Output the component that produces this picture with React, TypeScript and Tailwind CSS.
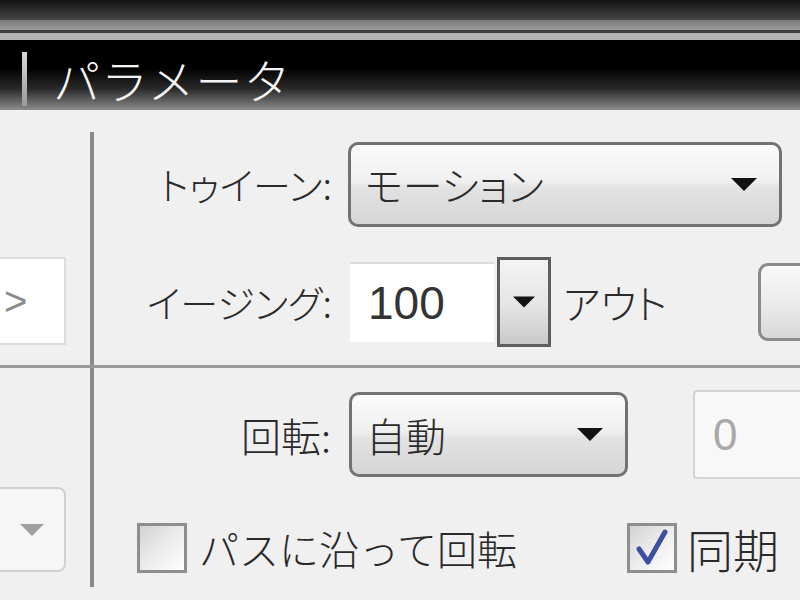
import React from 'react'

const jp = "font-['Noto_Sans_CJK_JP','Noto_Sans',sans-serif]"

const Arrow = ({ color = '#111', w = 26, h = 13 }: { color?: string; w?: number; h?: number }) => (
  <svg width={w} height={h} viewBox="0 0 26 13">
    <polygon points="0,0 26,0 13,13" fill={color} />
  </svg>
)

const Combo = ({ label, width }: { label: string; width: string }) => (
  <div
    className={`${width} h-[85px] flex items-center justify-between pl-[14px] pr-[22px] rounded-[10px] border-[3px] border-[#727272] bg-[linear-gradient(to_bottom,#fbfbfb_0%,#f0f0f0_45%,#e2e2e2_55%,#d6d6d6_100%)]`}
  >
    <span className="text-[40px] leading-none font-light text-[#2a2a2a] [font-feature-settings:'palt']">{label}</span>
    <Arrow />
  </div>
)

const Check = ({ checked }: { checked?: boolean }) => (
  <div className="w-[50px] h-[50px] shrink-0 border-[3px] border-[#8e8e8e] bg-[linear-gradient(135deg,#d2d2d2_0%,#ececec_50%,#ffffff_100%)] flex items-center justify-center">
    {checked && (
      <svg width="34" height="38" viewBox="0 0 34 38">
        <path d="M4 20 L13 33 L30 3" fill="none" stroke="#3d4f9e" strokeWidth="5" strokeLinecap="round" strokeLinejoin="round" />
      </svg>
    )}
  </div>
)

export default function App() {
  return (
    <div className={`w-[800px] h-[600px] overflow-hidden bg-[#f0f0f0] ${jp}`}>
      {/* title bar */}
      <div className="h-[20px] bg-[linear-gradient(to_bottom,#121212,#474747)]" />
      <div className="h-[10px] bg-[linear-gradient(to_bottom,#7a7a7a,#9c9c9c)]" />
      <div className="h-[3px] bg-[#3e3e3e]" />
      <div className="h-[7px] bg-[#b4b4b4]" />
      <div className="h-[70px] flex items-center bg-[linear-gradient(to_bottom,#000_0%,#000_40%,#2a2a2a_70%,#8c8c8c_100%)]">
        <div className="ml-[22px] w-[5px] h-[54px] mt-[8px] bg-[linear-gradient(to_bottom,#d8d8d8,#9a9a9a)]" />
        <span className="ml-[26px] mt-[6px] text-[47px] leading-none tracking-[1px] font-light text-[#f4f4f4]">パラメータ</span>
      </div>

      {/* upper section */}
      <div className="flex h-[258px] border-b-[3px] border-[#999]">
        <div className="w-[90px] shrink-0 pt-[147px]">
          <div className="w-[66px] h-[88px] bg-white border-y-2 border-r-2 border-[#dcdcdc] flex items-center pl-[4px]">
            <span className="text-[40px] leading-none text-[#8a8a8a] font-['Liberation_Sans',sans-serif]">&gt;</span>
          </div>
        </div>
        <div className="w-[4px] shrink-0 mt-[22px] bg-[#8a8a8a]" />
        <div className="flex-1 pt-[32px] flex flex-col gap-[31px]">
          <div className="flex items-center h-[84px]">
            <div className="w-[254px] text-right pr-[16px] text-[38px] leading-none font-light text-[#2a2a2a] [font-feature-settings:'palt']">トゥイーン:</div>
            <Combo label="モーション" width="w-[434px]" />
          </div>
          <div className="flex items-center h-[90px]">
            <div className="w-[254px] text-right pr-[16px] text-[38px] leading-none font-light text-[#2a2a2a] [font-feature-settings:'palt']">イージング:</div>
            <div className="w-[144px] h-[80px] ml-[2px] bg-white border-t-2 border-[#dcdcdc] flex items-center pl-[18px]">
              <span className="text-[46px] leading-none text-[#333] font-['Liberation_Sans',sans-serif]">100</span>
            </div>
            <div className="ml-[3px] w-[54px] h-[90px] border-[3px] border-[#5e5e5e] bg-[linear-gradient(to_bottom,#f4f4f4,#e6e6e6_50%,#c9c9c9)] flex items-center justify-center">
              <Arrow w={22} h={12} />
            </div>
            <span className="ml-[12px] text-[40px] leading-none font-light text-[#2a2a2a] [font-feature-settings:'palt']">アウト</span>
            <div className="ml-auto w-[50px] h-[78px] mr-[-8px] rounded-l-[10px] border-[3px] border-r-0 border-[#8a8a8a] bg-[linear-gradient(to_bottom,#f8f8f8,#ececec_50%,#d8d8d8)]" />
          </div>
        </div>
      </div>

      {/* lower section */}
      <div className="flex h-[229px]">
        <div className="w-[90px] shrink-0 pt-[119px]">
          <div className="w-[66px] h-[85px] rounded-r-[8px] border-y-2 border-r-2 border-[#d0d0d0] bg-[#f6f6f6] flex items-center justify-end pr-[20px]">
            <Arrow color="#a0a0a0" w={24} h={12} />
          </div>
        </div>
        <div className="w-[4px] shrink-0 mb-[10px] bg-[#8a8a8a]" />
        <div className="flex-1 pt-[22px] flex flex-col">
          <div className="flex items-center h-[89px]">
            <div className="w-[255px] text-right pr-[18px] text-[40px] leading-none font-light text-[#2a2a2a]">回転:</div>
            <Combo label="自動" width="w-[279px]" />
            <div className="ml-[65px] flex-1 h-[89px] border-y-2 border-l-2 border-[#d4d4d4] rounded-l-[4px] bg-[#f8f8f8] flex items-center pl-[18px]">
              <span className="text-[44px] leading-none text-[#a8a8a8] font-['Liberation_Sans',sans-serif]">0</span>
            </div>
          </div>
          <div className="flex items-center mt-[44px]">
            <div className="ml-[43px]">
              <Check />
            </div>
            <span className="ml-[12px] text-[40px] leading-none font-light text-[#2a2a2a]">パスに沿って回転</span>
            <div className="ml-[110px]">
              <Check checked />
            </div>
            <span className="ml-[10px] text-[46px] leading-none font-light text-[#2a2a2a]">同期</span>
          </div>
        </div>
      </div>
    </div>
  )
}
